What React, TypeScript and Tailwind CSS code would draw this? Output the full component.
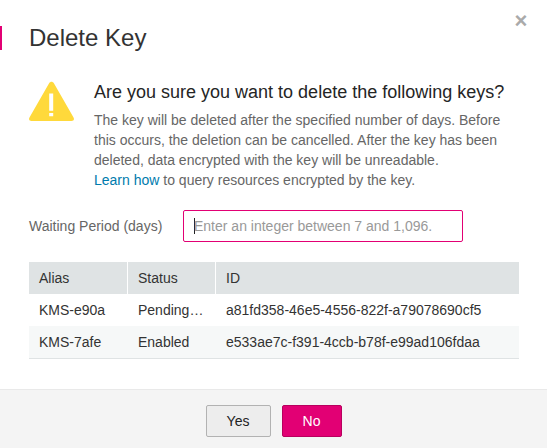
const keys = [
  { alias: "KMS-e90a", status: "Pending…", id: "a81fd358-46e5-4556-822f-a79078690cf5" },
  { alias: "KMS-7afe", status: "Enabled", id: "e533ae7c-f391-4ccb-b78f-e99ad106fdaa" },
];

function WarningIcon() {
  return (
    <svg width="46" height="41" viewBox="0 0 46 41" className="-mt-px shrink-0">
      <path
        d="M20.1 2.2C21.4 .2 23.6 .2 24.9 2.2L44.4 36.2C45.7 38.4 44.7 40 42.4 40H2.6C.3 40 -.7 38.4 .6 36.2Z"
        fill="#ffd93b"
      />
      <path d="M20.2 12.4H24.2V29.8H20.2ZM20.2 32H24.2V35.2H20.2Z" fill="#fff" />
    </svg>
  );
}

export default function App() {
  return (
    <div className="relative flex h-[448px] w-[547px] flex-col overflow-hidden bg-white font-['Liberation_Sans',Arial,sans-serif] text-sm leading-5 text-[#333]">
      <button
        aria-label="Close"
        className="absolute top-[11px] right-[16px] flex h-5 w-5 items-center justify-center text-[22px] leading-5 font-bold text-[#aaa]"
      >
        ×
      </button>
      <header className="mt-[26px] flex h-6 items-center border-l-2 border-[#e20074] pl-[27px]">
        <h1 className="text-2xl leading-6">Delete Key</h1>
      </header>
      <main className="px-[29px] pt-8">
        <section className="flex gap-[19px]">
          <WarningIcon />
          <div className="text-[#666]">
            <h2 className="mb-2 text-lg leading-5 whitespace-nowrap text-[#252525]">
              Are you sure you want to delete the following keys?
            </h2>
            <p className="whitespace-nowrap">
              The key will be deleted after the specified number of days. Before
              <br />
              this occurs, the deletion can be cancelled. After the key has been
              <br />
              deleted, data encrypted with the key will be unreadable.
              <br />
              <a className="text-[#007bad]">Learn how</a> to query resources encrypted by the key.
            </p>
          </div>
        </section>
        <div className="mt-5 flex h-8 items-center">
          <label className="w-[154px] text-[#666]">Waiting Period (days)</label>
          <div className="flex h-8 w-[280px] items-center rounded-[2px] border border-[#e20074] pl-[10px] text-[#999]">
            <span className="-mr-px h-4 w-px bg-[#222]" />
            <span>Enter an integer between 7 and 1,096.</span>
          </div>
        </div>
        <table className="mt-5 w-[490px] table-fixed border-collapse border-b border-[#dfe3e4] text-left">
          <colgroup>
            <col className="w-[99px]" />
            <col className="w-[88px]" />
            <col />
          </colgroup>
          <thead>
            <tr className="h-8 bg-[#dfe3e4]">
              <th className="p-0 font-normal">
                <div className="flex h-8 items-center border-r border-white pl-[10px]">Alias</div>
              </th>
              <th className="p-0 font-normal">
                <div className="flex h-8 items-center border-r border-white pl-[10px]">Status</div>
              </th>
              <th className="p-0 pl-[10px] font-normal">ID</th>
            </tr>
          </thead>
          <tbody>
            {keys.map((key) => (
              <tr key={key.id} className="h-8 even:bg-[#f6f8f8]">
                <td className="p-0 pl-[10px]">{key.alias}</td>
                <td className="p-0 pl-[10px] whitespace-nowrap">{key.status}</td>
                <td className="p-0 pl-[10px]">{key.id}</td>
              </tr>
            ))}
          </tbody>
        </table>
      </main>
      <footer className="mt-auto flex h-[59px] justify-center gap-[11px] border-t border-[#e9e9e9] bg-[#f4f4f4] pt-[15px]">
        <button className="h-8 w-[65px] rounded-[2px] border border-[#b2b2b2] bg-[#ededed] text-[#222]">Yes</button>
        <button className="h-8 w-[60px] rounded-[2px] border border-[#b8005e] bg-[#e20074] text-white">No</button>
      </footer>
    </div>
  );
}
